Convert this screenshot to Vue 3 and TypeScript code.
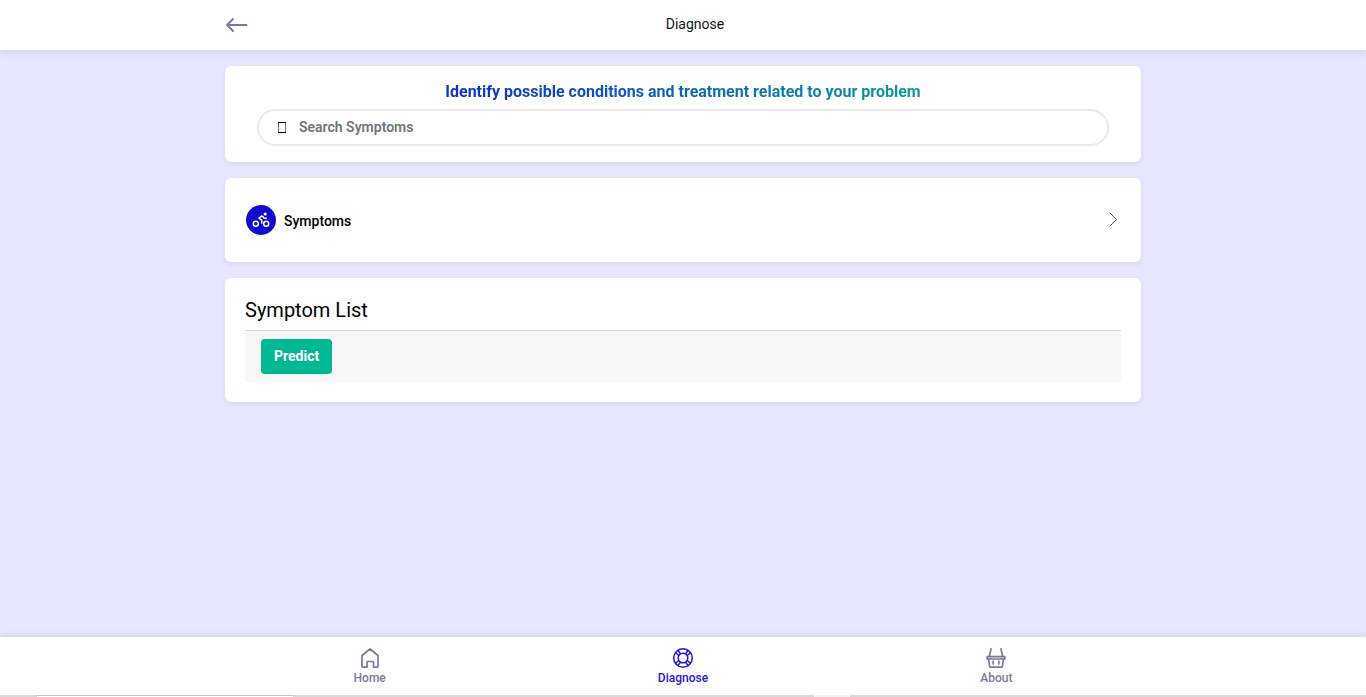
<script setup lang="ts">
import { ref } from 'vue'

type TabId = 'home' | 'diagnose' | 'about'

interface Tab {
  id: TabId
  label: string
}

const tabs: Tab[] = [
  { id: 'home', label: 'Home' },
  { id: 'diagnose', label: 'Diagnose' },
  { id: 'about', label: 'About' },
]

const activeTab = ref<TabId>('diagnose')
const query = ref('')
</script>

<template>
  <div class="page">
    <header class="topbar">
      <div class="topbar-inner">
        <button class="back" type="button" aria-label="Back">
          <svg viewBox="0 0 24 24" width="24" height="24" fill="none" stroke="currentColor" stroke-width="1.9" stroke-linecap="round" stroke-linejoin="round">
            <path d="M21.500 12H2.500M8 6L2 12L8 18" />
          </svg>
        </button>
        <h1 class="title">Diagnose</h1>
      </div>
    </header>

    <main class="content">
      <section class="card search-card">
        <h2 class="headline">Identify possible conditions and treatment related to your problem</h2>
        <label class="search">
          <svg class="search-icon" viewBox="0 0 8 11" width="8" height="11" fill="none" stroke="#000" aria-hidden="true">
            <path d="M.5 .5V10.5M7.5 .5V10.5" stroke-opacity=".55" />
            <path d="M0 .5H8M0 10.5H8" />
          </svg>
          <input v-model="query" type="text" placeholder="Search Symptoms" aria-label="Search Symptoms" />
        </label>
      </section>

      <a class="card symptoms" href="#symptoms">
        <span class="badge">
          <svg viewBox="0 0 18 18" width="18" height="18" fill="none" stroke="currentColor" stroke-width="1.5" stroke-linejoin="round" aria-hidden="true">
            <circle cx="3.800" cy="12.800" r="2.500" />
            <circle cx="14.200" cy="12.800" r="2.500" />
            <circle cx="13.200" cy="3" r="1.500" fill="currentColor" stroke="none" />
            <path d="M10.300 4.600L7 7.200L9.800 9.400V12.800M10.500 5L12 7.200H14.800" />
          </svg>
        </span>
        <span class="symptoms-label">Symptoms</span>
        <svg class="chevron" viewBox="0 0 16 16" width="16" height="16" fill="none" stroke="currentColor" stroke-width="1" stroke-linecap="round" stroke-linejoin="round" aria-hidden="true">
          <path d="M5 1L11.500 7.500L5 14" />
        </svg>
      </a>

      <section class="card list-card">
        <h2 class="list-title">Symptom List</h2>
        <div class="list-footer">
          <button class="predict" type="button">Predict</button>
        </div>
      </section>
    </main>

    <nav class="tabbar">
      <div class="tabbar-inner">
        <a
          v-for="tab in tabs"
          :key="tab.id"
          class="tab"
          :class="{ active: tab.id === activeTab }"
          :href="'#' + tab.id"
          @click="activeTab = tab.id"
        >
          <svg viewBox="0 0 22 22" width="22" height="22" fill="none" stroke="currentColor" stroke-width="1.700" stroke-linejoin="round" stroke-linecap="round" aria-hidden="true">
            <path v-if="tab.id === 'home'" d="M3 8.500L11 2L19 8.500V19.200Q19 20.200 18 20.200H14.500V15.300Q14.500 14.500 13.700 14.500H8.800Q8 14.500 8 15.300V20.200H4Q3 20.200 3 19.200Z" />
            <g v-else-if="tab.id === 'diagnose'" stroke-width="1.500">
              <circle cx="11" cy="11" r="9.300" />
              <circle cx="11" cy="11" r="4.800" />
              <path d="M8.500 6.800L5.800 3.600M6.800 8.500L3.600 5.800M13.500 6.800L16.200 3.600M15.200 8.500L18.400 5.800M8.500 15.200L5.800 18.400M6.800 13.500L3.600 16.200M13.500 15.200L16.200 18.400M15.200 13.500L18.400 16.200" />
            </g>
            <path v-else d="M2.200 9.700H19.800V12H2.200ZM3.500 12L4.500 19Q4.700 20.200 5.800 20.200H16.200Q17.300 20.200 17.500 19L18.500 12M4.300 9.500L6 1.800M17.700 9.500L16 1.800M8.200 14V17M13.800 14V17" />
          </svg>
          <span>{{ tab.label }}</span>
        </a>
      </div>
    </nav>
    <div class="edge" aria-hidden="true">
      <span class="edge-panel"></span>
      <span class="edge-mark"></span>
    </div>
  </div>
</template>

<style>
body {
  margin: 0;
  background: #e5e7ff;
}
</style>

<style scoped>
* {
  box-sizing: border-box;
}

.page {
  display: flex;
  flex-direction: column;
  min-height: 100vh;
  background: #e5e7ff;
  color: #000;
  font-family: Roboto, "Liberation Sans", sans-serif;
  font-size: 14px;
  line-height: 20px;
}

h1,
h2 {
  margin: 0;
}

a {
  color: inherit;
  text-decoration: none;
}

.topbar {
  background: #fff;
  box-shadow: 0 0 10px rgba(20, 20, 60, 0.14);
}

.topbar-inner {
  display: flex;
  align-items: center;
  max-width: 916px;
  height: 50px;
  margin: 0 auto;
}

.back {
  display: flex;
  padding: 0;
  border: 0;
  background: none;
  color: #787a9b;
}

.title {
  flex: 1;
  padding-bottom: 2px;
  color: #141420;
  font-size: 14px;
  font-weight: 400;
  text-align: center;
}

.content {
  display: flex;
  flex: 1;
  flex-direction: column;
  gap: 16px;
  width: 100%;
  max-width: 916px;
  margin: 0 auto;
  padding: 16px 0;
}

.card {
  border-radius: 6px;
  background: #fff;
  box-shadow: 0 2px 4px rgba(40, 40, 120, 0.08);
}

.search-card {
  display: flex;
  flex-direction: column;
  align-items: center;
  padding: 16px 32px;
}

.headline {
  margin-bottom: 7px;
  background: linear-gradient(90deg, #0f2fc4, #0a9a9e);
  background-clip: text;
  color: transparent;
  font-size: 16px;
  font-weight: 700;
  line-height: 20px;
}

.search {
  display: flex;
  align-items: center;
  gap: 13px;
  width: 100%;
  height: 37px;
  padding: 0 20px 0 19px;
  border: 2px solid #e9e9e9;
  border-radius: 20px;
}

.search input {
  flex: 1;
  min-width: 0;
  padding: 0 0 2px;
  border: 0;
  outline: 0;
  background: none;
  color: #212529;
  font: inherit;
  font-weight: 600;
}

.search input::placeholder {
  color: #6c757d;
  opacity: 1;
}

.symptoms {
  display: flex;
  align-items: center;
  gap: 8px;
  height: 84px;
  padding: 0 20px 0 21px;
}

.badge {
  display: flex;
  align-items: center;
  justify-content: center;
  width: 30px;
  height: 30px;
  border-radius: 50%;
  background: #110bd1;
  color: #fff;
}

.symptoms-label {
  flex: 1;
  padding-top: 2px;
  font-weight: 500;
}

.chevron {
  color: #555;
}

.list-card {
  padding: 20px;
}

.list-title {
  padding-bottom: 8px;
  font-size: 20px;
  font-weight: 400;
  line-height: 24px;
}

.list-footer {
  padding: 8px 16px;
  border-top: 1px solid #d8d8d8;
  border-radius: 0 0 3px 3px;
  background: #f7f7f7;
}

.predict {
  display: block;
  height: 35px;
  padding: 0 13px 2px;
  border: 0;
  border-radius: 4px;
  background: #00b894;
  color: #fff;
  font: inherit;
  font-weight: 700;
}

.tabbar {
  background: #fff;
  box-shadow: 0 0 8px rgba(20, 20, 60, 0.12);
}

.tabbar-inner {
  display: flex;
  max-width: 940px;
  height: 58px;
  margin: 0 auto;
}

.tab {
  display: flex;
  flex: 1;
  flex-direction: column;
  align-items: center;
  padding-top: 10px;
  color: #787a9b;
  font-size: 12px;
  font-weight: 500;
  line-height: 18px;
}

.tab.active {
  color: #1e16d5;
}

.edge {
  display: flex;
  justify-content: space-between;
  height: 2px;
  padding: 0 516px 0 37px;
  background: #d8d9d8;
}

.edge-panel {
  width: 256px;
  border-top: 1px solid #c4c4c4;
  background: #fff;
}

.edge-mark {
  width: 36px;
  background: #f2f2f2;
}
</style>
